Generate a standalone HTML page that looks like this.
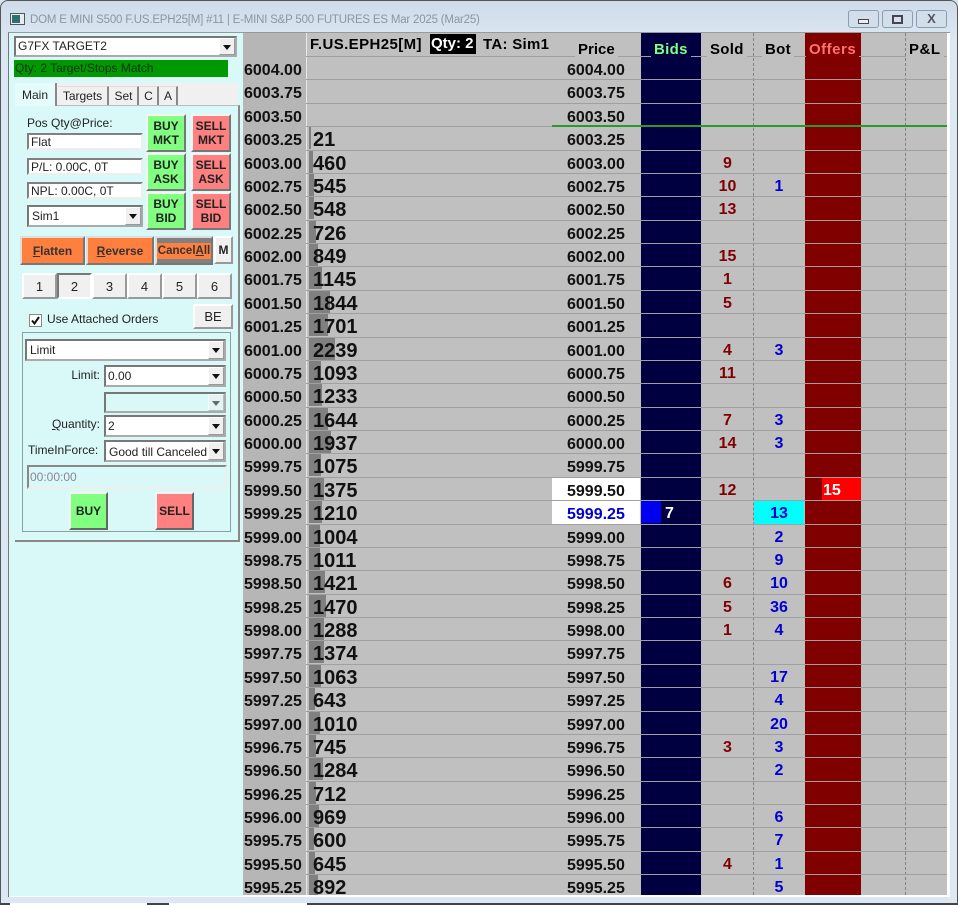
<!DOCTYPE html>
<html><head><meta charset="utf-8"><title>DOM</title>
<style>
html,body{margin:0;padding:0;width:958px;height:905px;overflow:hidden;background:#d9e6f2}
body{position:relative;font-family:"Liberation Sans",sans-serif;color:#000}
div,span,i,b{position:absolute;display:block;box-sizing:border-box;font-style:normal;white-space:nowrap}
.c{display:flex;align-items:center;justify-content:center;text-align:center}
#grid{left:243px;top:33px;width:704px;height:862px;overflow:hidden;background:#c0c0c0}
.r{left:-243px;width:958px;height:24px;font:bold 16px/27px "Liberation Sans",sans-serif;margin-top:-33px}
.r:before{content:"";position:absolute;left:306px;width:641px;top:0;height:1px;background:#a0a0a0}
.a{left:244px;top:1px;color:#111}
.p{left:567px;top:1px;color:#111}
.v{left:313px;top:1px;font-size:20px;color:#111}
.o{left:309px;top:1px;height:22px;background:#808080}
.s{left:702px;width:51px;text-align:center;color:#800000}
.t{left:754px;width:50px;text-align:center;color:#0000d0}
.h{font:bold 15px/18px "Liberation Sans",sans-serif;background:#c0c0c0;padding:0 3px;letter-spacing:.3px}
.in{background:#fff;border:2px solid;border-color:#808080 #eee #eee #808080;font-size:12px;color:#222;line-height:15px;padding-left:2px}
.cb{background:#fff;border:2px solid;border-color:#777 #aaa #aaa #777;font-size:12px;color:#222;padding-left:2px}
.ar{right:0;top:0;bottom:0;width:16px;background:#f0f0f0;border:1px solid;border-color:#fff #999 #999 #fff}
.ar:after{content:"";position:absolute;left:3px;top:6px;border:4px solid transparent;border-top:5px solid #111;border-bottom:0}
.bt{border:2px solid;border-color:#f4f4f4 #777 #777 #f4f4f4;font:bold 12px/14px "Liberation Sans",sans-serif;color:#222}
.g{background:#80ff80}.d{background:#ff8080}
.n{background:#f0f0f0;border:2px solid;border-color:#fff #999 #999 #fff;font-size:13px;color:#222}
.f{background:#ff7f3f;font:bold 12px/16px "Liberation Sans",sans-serif;color:#333;border:2px solid;border-color:#ddd #777 #777 #ddd}
.tab{background:#f0f0f0;border-right:2px solid #888;border-top:1px solid #ddd;font-size:12px;color:#222}
.l{font-size:12px;line-height:15px;color:#222}
</style></head><body>
<div style="left:0;top:0;width:958px;height:905px;border:1px solid #555;border-radius:8px 8px 0 0;background:linear-gradient(#cfdbe8,#dbe7f3 40px)"></div>
<div style="left:10px;top:13px;width:15px;height:12px;background:#e8eef0;border:1px solid #555"></div>
<div style="left:12px;top:15px;width:8px;height:8px;background:#2f6f6f"></div>
<div style="left:30px;top:12px;font-size:11.5px;letter-spacing:-.2px;line-height:16px;color:#8a96a2" id="ttl">DOM E MINI S500 F.US.EPH25[M] #11 | E-MINI S&amp;P 500 FUTURES ES Mar 2025 (Mar25)</div>
<div style="left:848px;top:10px;width:31px;height:18px;border:1px solid #8a9db0;border-radius:3px;background:#d2deea"></div>
<div style="left:858px;top:19px;width:11px;height:5px;border:1px solid #445;background:#eee"></div>
<div style="left:882px;top:10px;width:31px;height:18px;border:1px solid #8a9db0;border-radius:3px;background:#d2deea"></div>
<div style="left:892px;top:15px;width:11px;height:9px;border:2px solid #445;background:#dde"></div>
<div style="left:916px;top:10px;width:31px;height:18px;border:1px solid #8a9db0;border-radius:3px;background:#d2deea"></div>
<div class="c" style="left:916px;top:10px;width:31px;height:18px;font:bold 13px/18px 'Liberation Sans',sans-serif;color:#556">X</div>
<div style="left:8px;top:32px;width:942px;height:865px;background:#fff;border-left:1px solid #777;border-top:1px solid #999"></div>
<div style="left:9px;top:33px;width:234px;height:863px;background:#d9f9f9"></div>

<div id="grid">
<div style="left:0;top:0;width:63px;height:862px;background:#b6b6b6"></div>
<div style="left:63px;top:0;width:1px;height:862px;background:#e8e8e8"></div>
<div style="left:398px;top:0;width:60px;height:862px;background:#000040"></div>
<div style="left:562px;top:0;width:56px;height:862px;background:#800000"></div>
<div style="left:510px;top:0;width:1px;height:862px;border-left:1px dashed #808080"></div>
<div style="left:662px;top:0;width:1px;height:862px;border-left:1px dashed #808080"></div>

<div class="r" style="top:56px"><i class="a">6004.00</i><i class="p">6004.00</i></div>
<div class="r" style="top:79px"><i class="a">6003.75</i><i class="p">6003.75</i></div>
<div class="r" style="top:103px"><i class="a">6003.50</i><i class="p">6003.50</i></div>
<div class="r" style="top:126px"><i class="a">6003.25</i><b class="o" style="width:2px"></b><i class="v">21</i><i class="p">6003.25</i></div>
<div class="r" style="top:150px"><i class="a">6003.00</i><b class="o" style="width:4px"></b><i class="v">460</i><i class="p">6003.00</i><i class="s">9</i></div>
<div class="r" style="top:173px"><i class="a">6002.75</i><b class="o" style="width:5px"></b><i class="v">545</i><i class="p">6002.75</i><i class="s">10</i><i class="t">1</i></div>
<div class="r" style="top:196px"><i class="a">6002.50</i><b class="o" style="width:5px"></b><i class="v">548</i><i class="p">6002.50</i><i class="s">13</i></div>
<div class="r" style="top:220px"><i class="a">6002.25</i><b class="o" style="width:7px"></b><i class="v">726</i><i class="p">6002.25</i></div>
<div class="r" style="top:243px"><i class="a">6002.00</i><b class="o" style="width:9px"></b><i class="v">849</i><i class="p">6002.00</i><i class="s">15</i></div>
<div class="r" style="top:266px"><i class="a">6001.75</i><b class="o" style="width:13px"></b><i class="v">1145</i><i class="p">6001.75</i><i class="s">1</i></div>
<div class="r" style="top:290px"><i class="a">6001.50</i><b class="o" style="width:21px"></b><i class="v">1844</i><i class="p">6001.50</i><i class="s">5</i></div>
<div class="r" style="top:313px"><i class="a">6001.25</i><b class="o" style="width:19px"></b><i class="v">1701</i><i class="p">6001.25</i></div>
<div class="r" style="top:337px"><i class="a">6001.00</i><b class="o" style="width:26px"></b><i class="v">2239</i><i class="p">6001.00</i><i class="s">4</i><i class="t">3</i></div>
<div class="r" style="top:360px"><i class="a">6000.75</i><b class="o" style="width:12px"></b><i class="v">1093</i><i class="p">6000.75</i><i class="s">11</i></div>
<div class="r" style="top:383px"><i class="a">6000.50</i><b class="o" style="width:13px"></b><i class="v">1233</i><i class="p">6000.50</i></div>
<div class="r" style="top:407px"><i class="a">6000.25</i><b class="o" style="width:19px"></b><i class="v">1644</i><i class="p">6000.25</i><i class="s">7</i><i class="t">3</i></div>
<div class="r" style="top:430px"><i class="a">6000.00</i><b class="o" style="width:22px"></b><i class="v">1937</i><i class="p">6000.00</i><i class="s">14</i><i class="t">3</i></div>
<div class="r" style="top:453px"><i class="a">5999.75</i><b class="o" style="width:12px"></b><i class="v">1075</i><i class="p">5999.75</i></div>
<div class="r" style="top:477px"><i class="a">5999.50</i><b class="o" style="width:15px"></b><i class="v">1375</i><b style="left:552px;top:1px;width:88px;height:22px;background:#fff"></b><i class="p">5999.50</i><i class="s">12</i><b style="left:822px;top:1px;width:39px;height:22px;background:#f00"></b><i style="left:823px;color:#fff">15</i></div>
<div class="r" style="top:500px"><i class="a">5999.25</i><b class="o" style="width:13px"></b><i class="v">1210</i><b style="left:552px;top:1px;width:88px;height:23px;background:#fff"></b><i class="p" style="color:#0000d0">5999.25</i><b style="left:641px;top:1px;width:20px;height:22px;background:#0000f0"></b><i style="left:665px;color:#fff">7</i><b style="left:754px;top:1px;width:50px;height:23px;background:#0ff"></b><i class="t">13</i></div>
<div class="r" style="top:524px"><i class="a">5999.00</i><b class="o" style="width:11px"></b><i class="v">1004</i><i class="p">5999.00</i><i class="t">2</i></div>
<div class="r" style="top:547px"><i class="a">5998.75</i><b class="o" style="width:11px"></b><i class="v">1011</i><i class="p">5998.75</i><i class="t">9</i></div>
<div class="r" style="top:570px"><i class="a">5998.50</i><b class="o" style="width:16px"></b><i class="v">1421</i><i class="p">5998.50</i><i class="s">6</i><i class="t">10</i></div>
<div class="r" style="top:594px"><i class="a">5998.25</i><b class="o" style="width:17px"></b><i class="v">1470</i><i class="p">5998.25</i><i class="s">5</i><i class="t">36</i></div>
<div class="r" style="top:617px"><i class="a">5998.00</i><b class="o" style="width:15px"></b><i class="v">1288</i><i class="p">5998.00</i><i class="s">1</i><i class="t">4</i></div>
<div class="r" style="top:640px"><i class="a">5997.75</i><b class="o" style="width:15px"></b><i class="v">1374</i><i class="p">5997.75</i></div>
<div class="r" style="top:664px"><i class="a">5997.50</i><b class="o" style="width:12px"></b><i class="v">1063</i><i class="p">5997.50</i><i class="t">17</i></div>
<div class="r" style="top:687px"><i class="a">5997.25</i><b class="o" style="width:6px"></b><i class="v">643</i><i class="p">5997.25</i><i class="t">4</i></div>
<div class="r" style="top:711px"><i class="a">5997.00</i><b class="o" style="width:11px"></b><i class="v">1010</i><i class="p">5997.00</i><i class="t">20</i></div>
<div class="r" style="top:734px"><i class="a">5996.75</i><b class="o" style="width:7px"></b><i class="v">745</i><i class="p">5996.75</i><i class="s">3</i><i class="t">3</i></div>
<div class="r" style="top:757px"><i class="a">5996.50</i><b class="o" style="width:14px"></b><i class="v">1284</i><i class="p">5996.50</i><i class="t">2</i></div>
<div class="r" style="top:781px"><i class="a">5996.25</i><b class="o" style="width:7px"></b><i class="v">712</i><i class="p">5996.25</i></div>
<div class="r" style="top:804px"><i class="a">5996.00</i><b class="o" style="width:10px"></b><i class="v">969</i><i class="p">5996.00</i><i class="t">6</i></div>
<div class="r" style="top:827px"><i class="a">5995.75</i><b class="o" style="width:5px"></b><i class="v">600</i><i class="p">5995.75</i><i class="t">7</i></div>
<div class="r" style="top:851px"><i class="a">5995.50</i><b class="o" style="width:6px"></b><i class="v">645</i><i class="p">5995.50</i><i class="s">4</i><i class="t">1</i></div>
<div class="r" style="top:874px"><i class="a">5995.25</i><b class="o" style="width:9px"></b><i class="v">892</i><i class="p">5995.25</i><i class="t">5</i></div>

<div style="left:309px;top:92px;width:395px;height:2px;background:#2a9a2a"></div>
</div>

<div class="h" style="left:307px;top:36px;background:none;letter-spacing:.4px">F.US.EPH25[M]</div>
<div class="h" style="left:430px;top:34px;width:46px;height:20px;background:#000;color:#fff;line-height:20px;padding:0 0 0 1px;letter-spacing:0">Qty: 2</div>
<div class="h" style="left:480px;top:36px;background:none">TA: Sim1</div>
<div class="h" style="left:575px;top:41px;height:16px;letter-spacing:0">Price</div>
<div class="h" style="left:651px;top:41px;height:16px;color:#80ff80;background:#000040">Bids</div>
<div class="h" style="left:707px;top:41px;height:16px">Sold</div>
<div class="h" style="left:762px;top:41px;height:16px">Bot</div>
<div class="h" style="left:806px;top:41px;height:16px;color:#ff7070;background:#800000;letter-spacing:.5px">Offers</div>
<div class="h" style="left:906px;top:41px;height:16px;letter-spacing:.5px">P&amp;L</div>

<div class="cb" style="left:14px;top:36px;width:223px;height:21px;line-height:17px">G7FX TARGET2<div class="ar"></div></div>
<div style="left:14px;top:60px;width:214px;height:17px;background:#009900;font-size:12px;line-height:17px;color:#063206;padding-left:1px">Qty: 2 Target/Stops Match</div>
<div style="left:15px;top:83px;width:223px;height:22px;background:#f0f0f0"></div>
<div class="tab c" style="left:58px;top:86px;width:51px;height:19px">Targets</div>
<div class="tab c" style="left:110px;top:86px;width:29px;height:19px">Set</div>
<div class="tab c" style="left:140px;top:86px;width:19px;height:19px">C</div>
<div class="tab c" style="left:160px;top:86px;width:18px;height:19px">A</div>
<div style="left:15px;top:105px;width:225px;height:437px;background:#d9f9f9;border-right:2px solid #888;border-bottom:2px solid #888;border-top:1px solid #bbb"></div>
<div class="c" style="left:15px;top:83px;width:42px;height:23px;background:#e6fbfb;border-right:2px solid #888;font-size:12px;color:#222;padding-right:0">Main</div>

<div class="l" style="left:27px;top:116px">Pos Qty@Price:</div>
<div class="in" style="left:27px;top:133px;width:116px;height:17px">Flat</div>
<div class="in" style="left:27px;top:158px;width:116px;height:17px">P/L: 0.00C, 0T</div>
<div class="in" style="left:27px;top:182px;width:116px;height:17px">NPL: 0.00C, 0T</div>
<div class="cb" style="left:27px;top:205px;width:116px;height:22px;line-height:19px;padding-left:3px">Sim1<div class="ar"></div></div>

<div class="bt g c" style="left:146px;top:114px;width:40px;height:38px">BUY<br>MKT</div>
<div class="bt d c" style="left:191px;top:114px;width:40px;height:38px">SELL<br>MKT</div>
<div class="bt g c" style="left:146px;top:153px;width:40px;height:38px">BUY<br>ASK</div>
<div class="bt d c" style="left:191px;top:153px;width:40px;height:38px">SELL<br>ASK</div>
<div class="bt g c" style="left:146px;top:192px;width:40px;height:38px">BUY<br>BID</div>
<div class="bt d c" style="left:191px;top:192px;width:40px;height:38px">SELL<br>BID</div>

<div class="f c" style="left:20px;top:236px;width:65px;height:29px"><span style="position:static"><u>F</u>latten</span></div>
<div class="f c" style="left:86px;top:236px;width:68px;height:29px"><span style="position:static"><u>R</u>everse</span></div>
<div class="f c" style="left:155px;top:236px;width:58px;height:29px;background:#808080"><span style="position:static;background:#ff7f3f;padding:0 1px;font-size:11.5px">Cancel<u>A</u>ll</span></div>
<div class="n c" style="left:214px;top:236px;width:19px;height:28px;font-weight:bold;font-size:12px">M</div>

<div class="n c" style="left:22px;top:273px;width:35px;height:26px">1</div>
<div class="n c" style="left:57px;top:273px;width:35px;height:26px;border-color:#777 #fff #fff #777">2</div>
<div class="n c" style="left:92px;top:273px;width:35px;height:26px">3</div>
<div class="n c" style="left:127px;top:273px;width:35px;height:26px">4</div>
<div class="n c" style="left:162px;top:273px;width:35px;height:26px">5</div>
<div class="n c" style="left:197px;top:273px;width:35px;height:26px">6</div>

<div style="left:29px;top:314px;width:13px;height:13px;background:#fff;border:1px solid #888"></div>
<svg style="position:absolute;left:29px;top:314px" width="13" height="13"><path d="M3 6.5 L5.5 9.5 L10 3" fill="none" stroke="#111" stroke-width="2"/></svg>
<div class="l" style="left:47px;top:312px">Use Attached Orders</div>
<div class="n c" style="left:193px;top:304px;width:40px;height:25px">BE</div>

<div style="left:22px;top:332px;width:209px;height:200px;border:1px solid #88a0a0"></div>
<div class="cb" style="left:25px;top:339px;width:201px;height:22px;line-height:19px;padding-left:3px">Limit<div class="ar"></div></div>
<div class="l" style="right:858px;top:368px">Limit:</div>
<div class="cb" style="left:104px;top:365px;width:122px;height:22px;line-height:19px">0.00<div class="ar"></div></div>
<div class="cb" style="left:104px;top:392px;width:122px;height:21px;background:#d9f9f9"><div class="ar" style="opacity:.6"></div></div>
<div class="l" style="right:858px;top:417px"><u>Q</u>uantity:</div>
<div class="cb" style="left:104px;top:415px;width:122px;height:22px;line-height:19px">2<div class="ar"></div></div>
<div class="l" style="left:28px;top:443px">TimeInForce:</div>
<div class="cb" style="left:104px;top:440px;width:122px;height:22px;line-height:20px;padding-left:3px;overflow:hidden">Good till Canceled<div class="ar"></div></div>
<div style="left:27px;top:465px;width:200px;height:24px;background:#d9f9f9;border:2px solid;border-color:#888 #eee #eee #888;font-size:12px;line-height:20px;color:#889;padding-left:1px">00:00:00</div>
<div class="bt g c" style="left:69px;top:492px;width:39px;height:38px;border-color:#f4f4f4 #666 #666 #f4f4f4">BUY</div>
<div class="bt d c" style="left:155px;top:492px;width:39px;height:38px;border-color:#f4f4f4 #666 #666 #f4f4f4">SELL</div>

<div style="left:0;top:903px;width:958px;height:2px;background:#444"></div>
<div style="left:10px;top:903px;width:137px;height:2px;background:#fff"></div>
<div style="left:169px;top:903px;width:138px;height:2px;background:#fff"></div>
</body></html>
